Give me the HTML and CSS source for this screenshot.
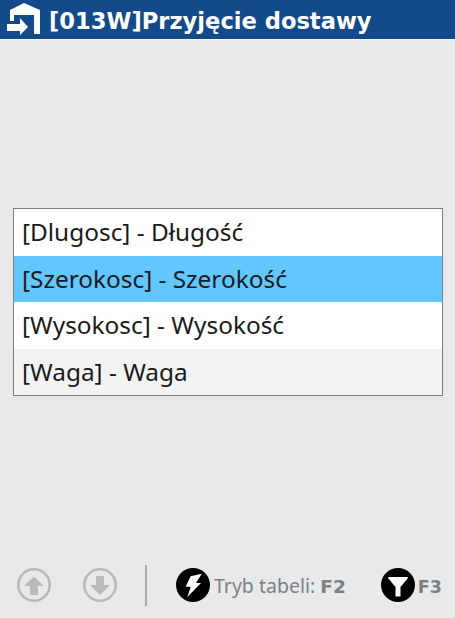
FILE: index.html
```html
<!DOCTYPE html>
<html lang="pl">

<head>
    <meta charset="UTF-8">
    <meta name="viewport" content="width=device-width, initial-scale=1.0">
    <title>Przyjęcie dostawy</title>
    <link rel="stylesheet" href="styles.css">
</head>

<body>
    <div class="page">
        <header class="title-bar">
            <svg class="title-icon" viewBox="0 0 34 34" width="34" height="34">
                <path d="M4 7L18 0L34 7V31H28V12H8V18H4Z" fill="#fff" />
                <path d="M1 21H14V15L22 24L14 32V28H1Z" fill="#fff" />
            </svg>
            <h1>[013W]Przyjęcie dostawy</h1>
        </header>

        <main class="content">
            <ul class="list">
                <li>[Dlugosc] - Długość</li>
                <li class="selected">[Szerokosc] - Szerokość</li>
                <li>[Wysokosc] - Wysokość</li>
                <li class="alt">[Waga] - Waga</li>
            </ul>
        </main>

        <footer class="toolbar">
            <svg class="nav-icon" viewBox="0 0 34 34" width="34" height="34">
                <circle cx="17" cy="17" r="15.700" fill="none" stroke="#b9babb" stroke-width="2.600" />
                <path d="M17 8.500L27 18H21V27H13V18H7Z" fill="#b9babb" />
            </svg>
            <svg class="nav-icon second" viewBox="0 0 34 34" width="34" height="34">
                <circle cx="17" cy="17" r="15.700" fill="none" stroke="#b9babb" stroke-width="2.600" />
                <path d="M17 27L27 17H21V8H13V17H7Z" fill="#b9babb" />
            </svg>
            <div class="divider"></div>
            <svg class="key-icon" viewBox="0 0 34 34" width="34" height="34">
                <circle cx="17" cy="17" r="17" fill="#000" />
                <path d="M14.700 8.300L25.700 5.700L20 15H25L11.300 29L14.700 19L9.700 18.500Z" fill="#fff" />
            </svg>
            <span class="key-label">Tryb tabeli: <b>F2</b></span>
            <svg class="key-icon filter" viewBox="0 0 34 34" width="34" height="34">
                <circle cx="17" cy="17" r="17" fill="#000" />
                <path d="M7 10Q7 9 8 9H26Q27 9 27 10L19.500 19V28.500H14.500V19Z" fill="#fff" />
            </svg>
            <span class="key-label short"><b>F3</b></span>
        </footer>
    </div>
</body>

</html>
```

FILE: styles.css
```css
html,
body {
    margin: 0;
    height: 100%;
}

body {
    background: #e8e9eb;
    font-family: "Noto Sans", "Liberation Sans", sans-serif;
}

.page {
    height: 618px;
    display: flex;
    flex-direction: column;
    overflow: hidden;
}

/* title bar */
.title-bar {
    height: 40px;
    flex: none;
    display: flex;
    align-items: center;
    padding-left: 6px;
    background: #134a8a;
    border-bottom: 1px solid #f4f5f6;
    box-sizing: border-box;
}

.title-icon {
    flex: none;
    margin-right: 9px;
}

.title-bar h1 {
    margin: 0;
    padding-top: 2px;
    color: #fff;
    font-family: "DejaVu Sans", sans-serif;
    font-size: 22.600px;
    font-weight: 700;
    white-space: nowrap;
}

/* list */
.content {
    flex: 1;
    display: flex;
    flex-direction: column;
    justify-content: center;
    padding: 0 12px 0 13px;
}

.list {
    margin: 0;
    padding: 0;
    list-style: none;
    background: #fff;
    border: 1px solid #7f7f7f;
}

.list li {
    height: 46.500px;
    padding-left: 8px;
    line-height: 46px;
    font-size: 24.400px;
    color: #1a1a1a;
    white-space: nowrap;
}

.list .selected {
    background: #62c6ff;
}

.list .alt {
    background: #f3f3f3;
}

/* bottom toolbar */
.toolbar {
    height: 54px;
    flex: none;
    display: flex;
    align-items: center;
    padding: 0 0 12px 17px;
    box-sizing: border-box;
}

.nav-icon.second {
    margin-left: 32px;
}

.divider {
    width: 1.500px;
    height: 41px;
    margin: 0 29.500px 0 28px;
    background: #a9aaac;
}

.key-icon {
    flex: none;
}

.key-label {
    margin-left: 4px;
    color: #7e8084;
    font-size: 19.500px;
    white-space: nowrap;
}

.key-label b {
    font-family: "DejaVu Sans", sans-serif;
    font-size: 18.500px;
}

.key-label.short {
    margin-left: 3px;
}

.key-label.short b {
    font-size: 17.500px;
}

.key-icon.filter {
    margin-left: 35px;
}
```
